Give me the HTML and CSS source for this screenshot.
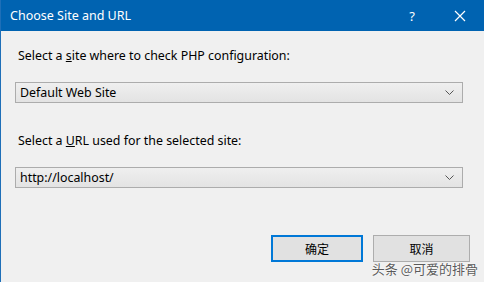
FILE: index.html
```html
<!DOCTYPE html>
<html lang="en">
<head>
    <meta charset="UTF-8">
    <title>Choose Site and URL</title>
    <link rel="stylesheet" href="styles.css">
</head>
<body>
    <div class="window">
        <div class="titlebar">
            <span class="title">Choose Site and URL</span>
            <span class="help">?</span>
            <span class="close">
                <svg width="12" height="12" viewBox="0 0 12 12"><path d="M1 1 L11 11 M11 1 L1 11" stroke="#fff" stroke-width="1.2" fill="none"/></svg>
            </span>
        </div>
        <div class="content">
            <label class="field-label">Select a <u>s</u>ite where to check PHP configuration:</label>
            <div class="combo">
                <span>Default Web Site</span>
                <svg class="chev" width="9" height="5" viewBox="0 0 9 5"><path d="M0.5 0.5 L4.5 4.5 L8.5 0.5" stroke="#555" fill="none"/></svg>
            </div>
            <label class="field-label second">Select a <u>U</u>RL used for the selected site:</label>
            <div class="combo">
                <span>http://localhost/</span>
                <svg class="chev" width="9" height="5" viewBox="0 0 9 5"><path d="M0.5 0.5 L4.5 4.5 L8.5 0.5" stroke="#555" fill="none"/></svg>
            </div>
            <div class="buttons">
                <button class="btn default">确定</button>
                <button class="btn">取消</button>
            </div>
        </div>
        <div class="watermark">头条 @可爱的排骨</div>
    </div>
</body>
</html>
```

FILE: styles.css
```css
body {
    margin: 0;
    width: 484px;
    height: 282px;
    overflow: hidden;
    font-family: "Noto Sans CJK SC", "Segoe UI", "Noto Sans", sans-serif;
    background: #f0f0f0;
}
.window {
    position: relative;
    height: 282px;
    border-left: 1px solid #1e6fb8;
    background: #f0f0f0;
    box-sizing: border-box;
}
.titlebar {
    height: 31px;
    background: #0063b1;
    color: #fff;
    display: flex;
    align-items: center;
    padding-left: 9px;
    font-size: 12.5px;
    font-family: "Noto Sans", sans-serif;
}
.title {
    flex: 1;
}
.help {
    width: 46px;
    text-align: center;
    font-size: 13px;
    margin-right: 2px;
}
.close {
    width: 46px;
    display: flex;
    justify-content: center;
    margin-right: 1px;
}
.content {
    padding: 15px 21px 0 14px;
    font-family: "Noto Sans", sans-serif;
    font-size: 12.4px;
    color: #000;
}
.field-label {
    display: block;
    height: 20px;
    line-height: 20px;
    padding-left: 3px;
    margin-bottom: 16px;
}
.field-label.second {
    margin-top: 28px;
}
.combo {
    height: 21px;
    box-sizing: border-box;
    border: 1px solid #acacac;
    background: linear-gradient(#efefef, #e3e3e3);
    display: flex;
    align-items: center;
    padding: 0 8px 0 4px;
}
.combo span {
    flex: 1;
}
.buttons {
    display: flex;
    justify-content: flex-end;
    gap: 10px;
    margin-top: 47px;
    margin-right: -7px;
}
.btn {
    width: 97px;
    height: 27px;
    box-sizing: border-box;
    border: 1px solid #adadad;
    background: #e1e1e1;
    font-family: "Noto Sans CJK SC", sans-serif;
    font-size: 12px;
    color: #000;
    padding: 0;
}
.btn.default {
    width: 92px;
    border: 2px solid #0078d7;
}
.watermark {
    position: absolute;
    right: 6px;
    bottom: 4px;
    font-family: "Noto Sans CJK SC", sans-serif;
    font-size: 13px;
    color: #5a5a5a;
    text-shadow: 0 0 1px #fff, 0 0 2px #fff;
}
```
